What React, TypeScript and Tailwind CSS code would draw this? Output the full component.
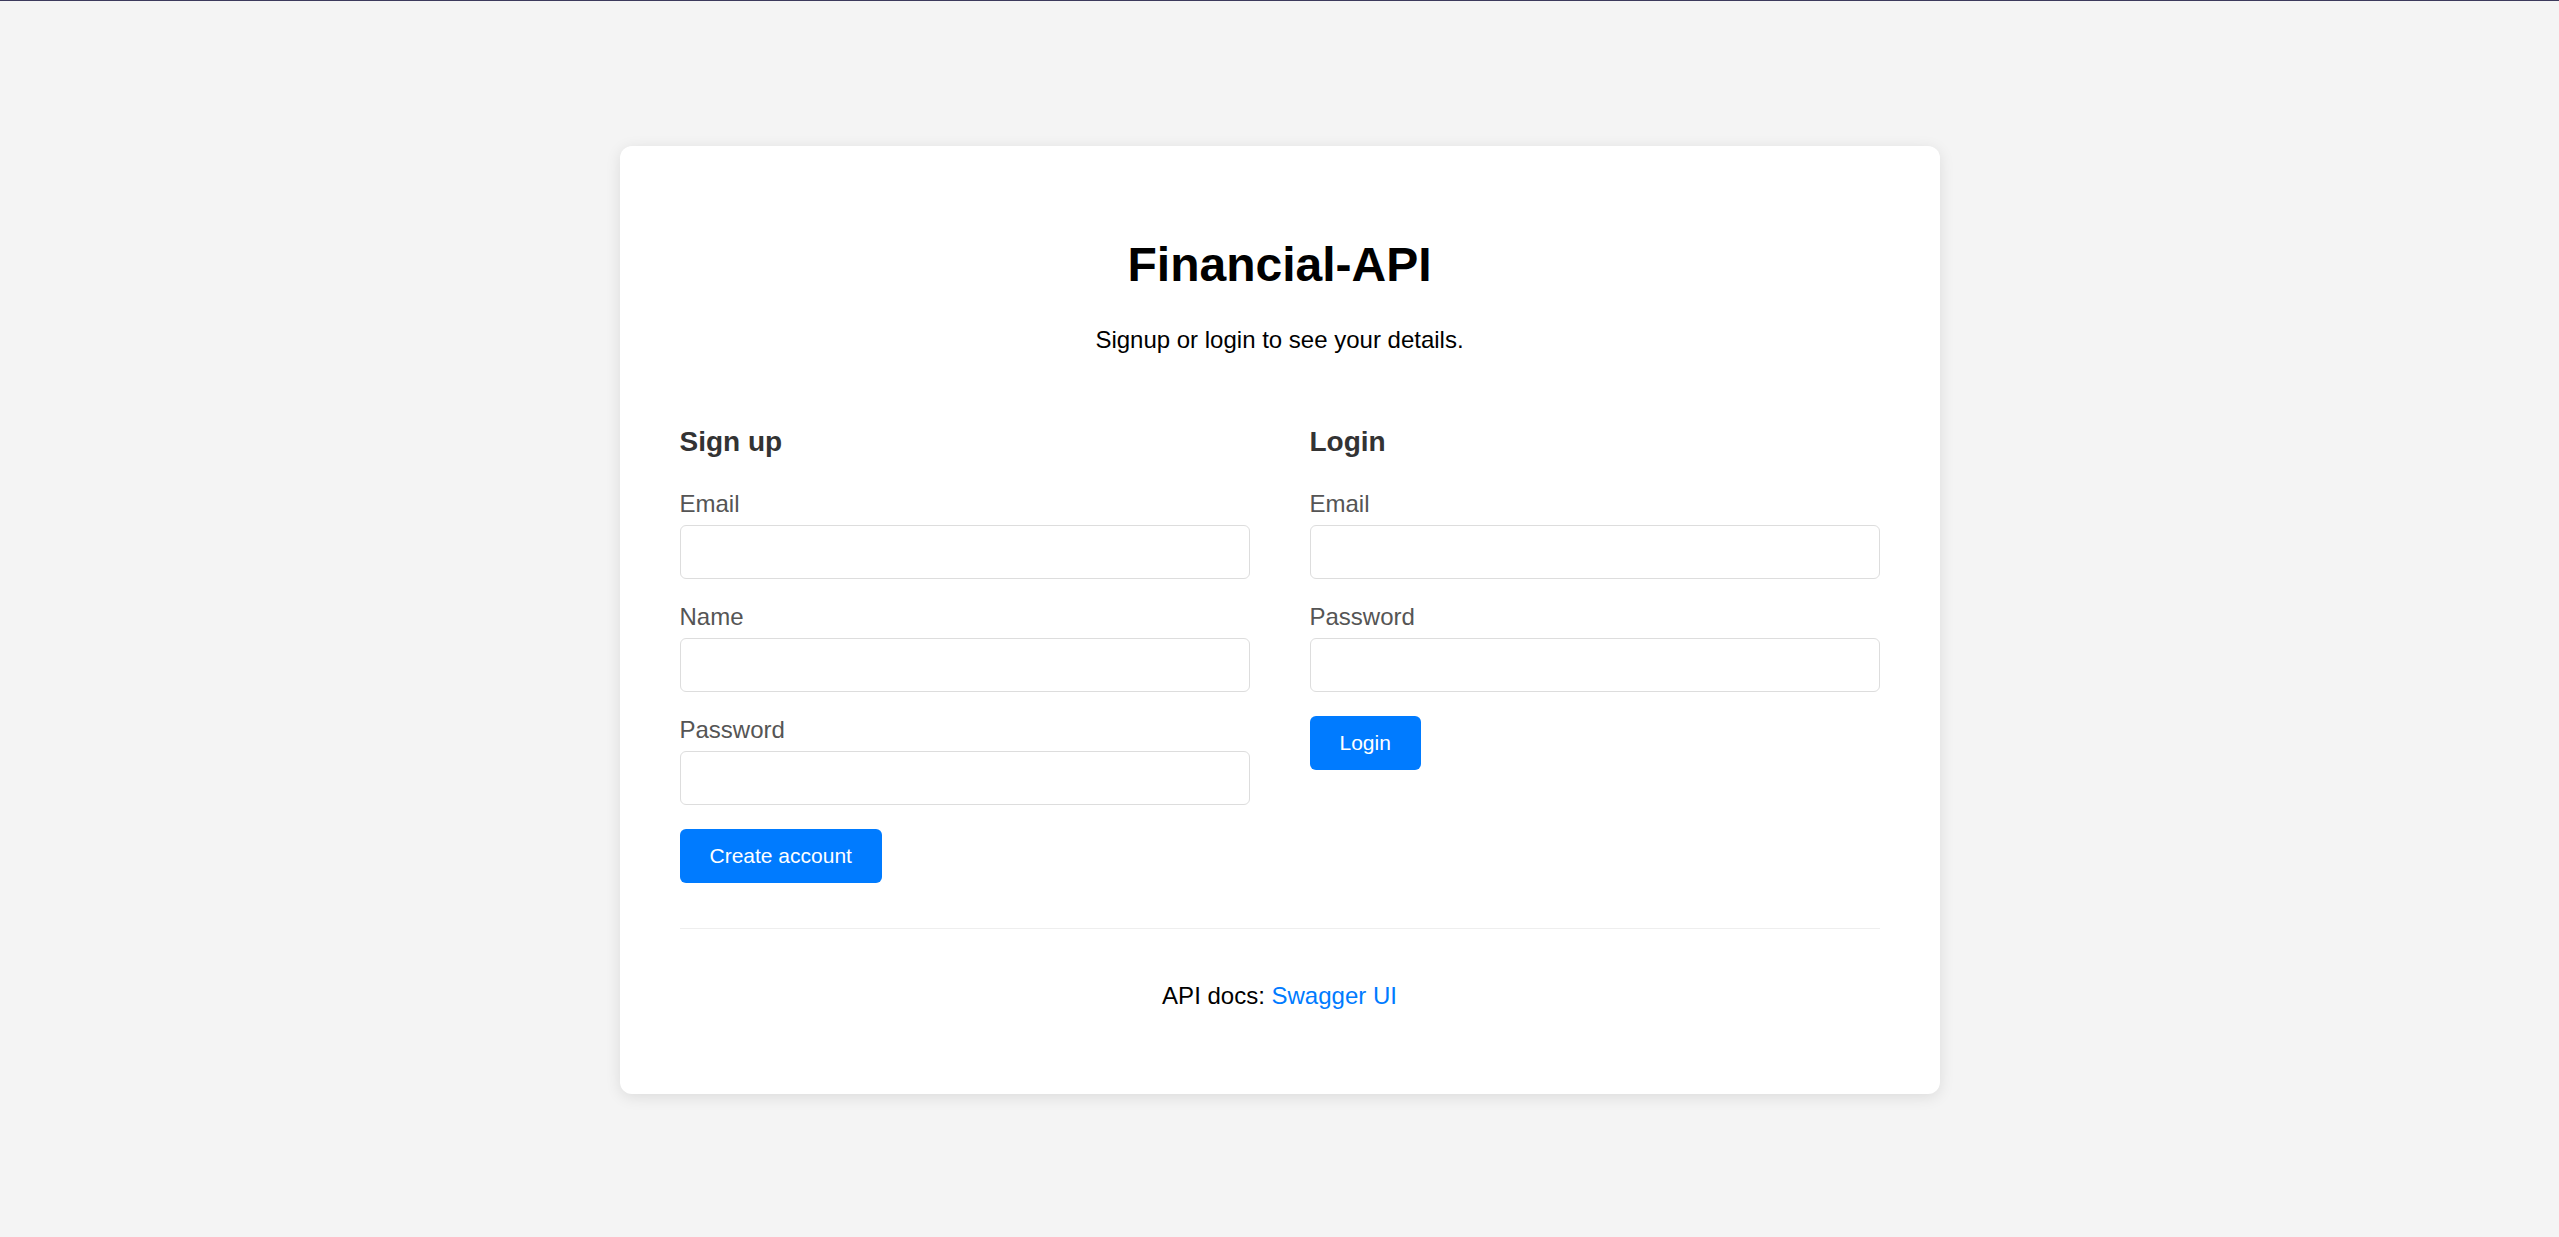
import React from "react";

const font = { fontFamily: '"Liberation Sans", Arial, sans-serif' };

function Field({ label, type = "text" }: { label: string; type?: string }) {
  return (
    <div className="mb-[24px]">
      <label className="block text-[24px] leading-[27px] text-[#555] mb-[8px]">
        {label}
      </label>
      <input
        type={type}
        className="block w-full h-[54px] border border-[#ddd] rounded-[6px] bg-white px-[12px] text-[24px] outline-none"
      />
    </div>
  );
}

function Button({ children }: { children: React.ReactNode }) {
  return (
    <button className="h-[54px] px-[30px] rounded-[6px] bg-[#007bff] text-white text-[21px] leading-[24px] cursor-pointer">
      {children}
    </button>
  );
}

export default function App() {
  return (
    <div
      className="min-h-screen bg-[#f4f4f4] border-t border-[#3c3a5c] flex justify-center items-start pt-[145px]"
      style={font}
    >
      <div className="w-[1320px] bg-white rounded-[12px] shadow-[0_3px_15px_rgba(0,0,0,0.1)] px-[60px] pt-[60px] pb-[60px]">
        <h1 className="mt-[31px] text-center text-[48px] leading-[55px] font-bold text-black">
          Financial-API
        </h1>
        <p className="mt-[34px] text-center text-[24px] leading-[28px] text-black">
          Signup or login to see your details.
        </p>

        <div className="mt-[72px] grid grid-cols-2 gap-x-[60px] items-start">
          <div>
            <h3 className="text-[28px] leading-[32px] font-bold text-[#333] mb-[32px]">
              Sign up
            </h3>
            <Field label="Email" type="email" />
            <Field label="Name" />
            <Field label="Password" type="password" />
            <Button>Create account</Button>
          </div>
          <div>
            <h3 className="text-[28px] leading-[32px] font-bold text-[#333] mb-[32px]">
              Login
            </h3>
            <Field label="Email" type="email" />
            <Field label="Password" type="password" />
            <Button>Login</Button>
          </div>
        </div>

        <div className="mt-[45px] border-t border-[#eee] pt-[53px] pb-[24px] text-center">
          <p className="text-[24px] leading-[28px] text-black">
            API docs:{" "}
            <a href="#" className="text-[#007bff]">
              Swagger UI
            </a>
          </p>
        </div>
      </div>
    </div>
  );
}
